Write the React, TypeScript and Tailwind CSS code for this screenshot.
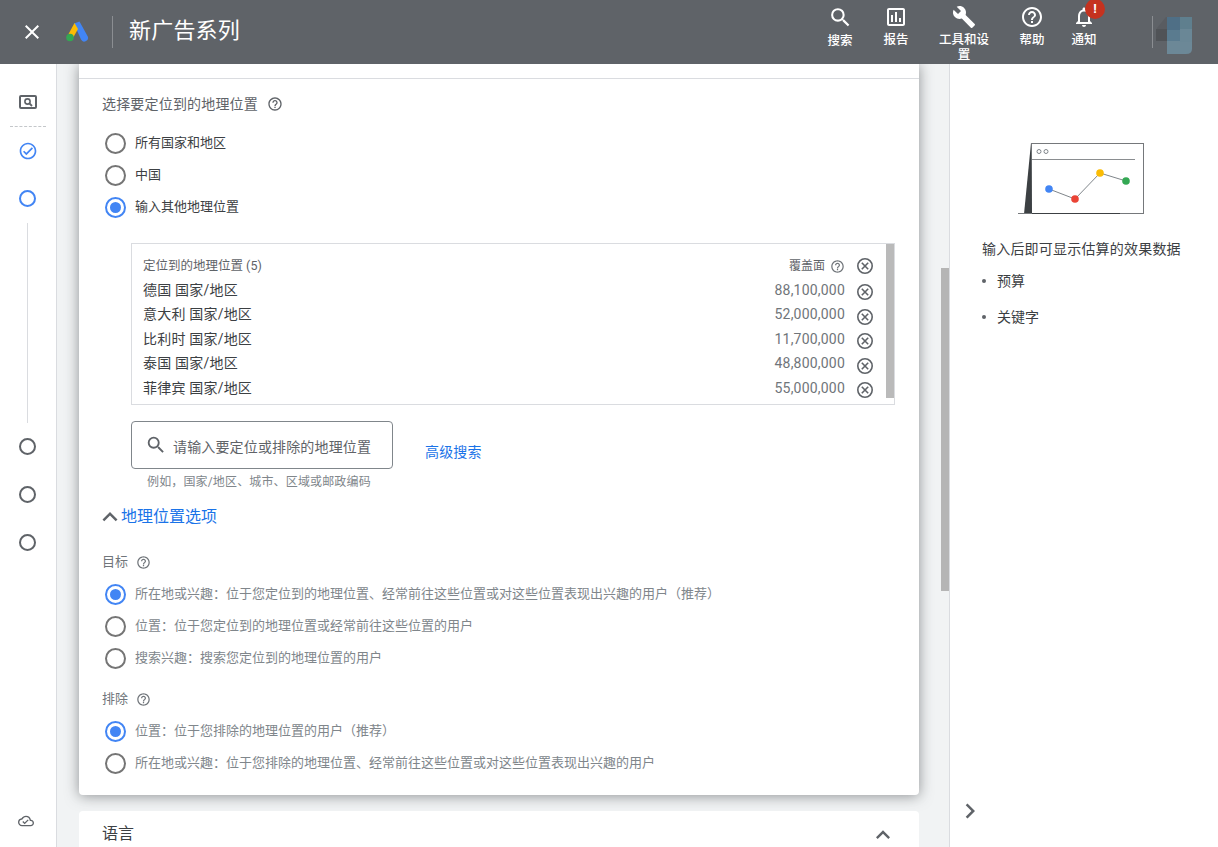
import {
  MdBuild,
  MdChevronRight,
  MdClose,
  MdHelpOutline,
  MdKeyboardArrowUp,
  MdNotificationsNone,
  MdOutlineAssessment,
  MdOutlineCheckCircle,
  MdOutlineCloudDone,
  MdSearch,
} from 'react-icons/md'

const font = "font-['Roboto','Noto_Sans_CJK_SC',sans-serif]"

const locations = [
  { name: '德国 国家/地区', reach: '88,100,000' },
  { name: '意大利 国家/地区', reach: '52,000,000' },
  { name: '比利时 国家/地区', reach: '11,700,000' },
  { name: '泰国 国家/地区', reach: '48,800,000' },
  { name: '菲律宾 国家/地区', reach: '55,000,000' },
]

function Radio({ checked, label, muted }: { checked?: boolean; label: string; muted?: boolean }) {
  return (
    <div className="flex h-[32px] items-center">
      <div className={`ml-[2.5px] flex h-[21px] w-[21px] items-center justify-center rounded-full border-2 ${checked ? 'border-[#4285f4]' : 'border-[#757575]'}`}>
        {checked && <div className="h-[11px] w-[11px] rounded-full bg-[#4285f4]" />}
      </div>
      <span className={`ml-[9.5px] text-[13px] ${muted ? 'text-[#80868b]' : 'text-[#3c4043]'}`}>{label}</span>
    </div>
  )
}

function NavItem({ icon, label, className }: { icon: React.ReactNode; label: string; className: string }) {
  return (
    <div className={`flex flex-col items-center self-start pt-[5px] text-center text-[12.5px] leading-[15px] font-medium text-white ${className}`}>
      {icon}
      <span className="mt-[3px]">{label}</span>
    </div>
  )
}

function StepCircle({ blue, className }: { blue?: boolean; className: string }) {
  return <div className={`h-[17px] w-[17px] rounded-full border-2 ${blue ? 'border-[#4285f4]' : 'border-[#5f6368]'} ${className}`} />
}

function RemoveIcon({ className }: { className: string }) {
  return (
    <svg width="18" height="18" viewBox="0 0 18 18" className={className}>
      <circle cx="9" cy="9" r="7.2" fill="none" stroke="#5f6368" strokeWidth="1.6" />
      <path d="M5.8 5.8 L12.2 12.2 M12.2 5.8 L5.8 12.2" stroke="#5f6368" strokeWidth="1.6" />
    </svg>
  )
}

function ChartIllustration() {
  return (
    <svg width="128" height="74" viewBox="0 0 128 74" className="ml-[35px]">
      <rect x="14.5" y="1.5" width="112" height="70" fill="#fff" stroke="#75787b" />
      <path d="M14 1 L7 72 L15 72 Z" fill="#3c4043" />
      <path d="M1 71.5 H127" stroke="#75787b" />
      <path d="M15 71.5 H103" stroke="#3c4043" />
      <path d="M15 17.5 H118" stroke="#8a8d90" strokeWidth="1.2" />
      <circle cx="22" cy="9.5" r="2" fill="none" stroke="#80868b" />
      <circle cx="29" cy="9.5" r="2" fill="none" stroke="#80868b" />
      <path d="M32 47 L58 57 L83 31 L109 39" fill="none" stroke="#80868b" />
      <circle cx="32" cy="47" r="3.8" fill="#4285f4" />
      <circle cx="58" cy="57" r="3.8" fill="#ea4335" />
      <circle cx="83" cy="31" r="3.8" fill="#fbbc04" />
      <circle cx="109" cy="39" r="3.8" fill="#34a853" />
    </svg>
  )
}

export default function App() {
  return (
    <div className={`flex h-[847px] w-[1218px] flex-col overflow-hidden bg-white ${font}`}>
      {/* Header */}
      <header className="flex h-[64px] shrink-0 items-start bg-[#5f6368]">
        <MdClose className="ml-[20px] mt-[20px] h-[24px] w-[24px] text-white" />
        <svg width="24" height="24" viewBox="0 0 24 24" className="ml-[21px] mt-[20px]">
          <path d="M9 3.5 L14.5 1.5 L22.5 16 A3.6 3.6 0 0 1 16 19.6 Z" fill="#4285f4" />
          <path d="M9.5 3 L3 15 L8.5 17 L13 9 Z" fill="#fbbc04" />
          <circle cx="5" cy="17.5" r="3.8" fill="#34a853" />
        </svg>
        <div className="ml-[23px] mt-[16px] h-[32px] w-px bg-[#8b8e92]" />
        <div className="ml-[16px] mt-[16px] w-[111px] text-[22px] leading-[30px] tracking-[0.2px] text-white">新广告系列</div>
        <NavItem className="ml-[587px] w-[26px]" label="搜索" icon={<MdSearch className="h-[25px] w-[25px]" />} />
        <NavItem className="ml-[30px] w-[26px]" label="报告" icon={<MdOutlineAssessment className="h-[24px] w-[24px]" />} />
        <NavItem className="ml-[29px] w-[52px]" label="工具和设置" icon={<MdBuild className="h-[24px] w-[24px]" />} />
        <NavItem className="ml-[29px] w-[26px]" label="帮助" icon={<MdHelpOutline className="h-[24px] w-[24px]" />} />
        <div className="relative">
          <NavItem className="ml-[26px] w-[26px]" label="通知" icon={<MdNotificationsNone className="h-[24px] w-[24px]" />} />
          <div className="absolute left-[40px] top-[-1px] flex h-[20px] w-[20px] items-center justify-center rounded-full bg-[#c5321f] text-[13px] font-bold text-white">!</div>
        </div>
        <div className="ml-[55px] mt-[16px] h-[32px] w-px bg-[#8b8e92]" />
        <svg width="38" height="40" viewBox="0 0 38 40" className="ml-[1px] mt-[15px]">
          <path d="M3 13 L12 2 H26 V26 H2 V16 Z" fill="#595c61" />
          <rect x="2" y="14" width="24" height="12" fill="#505357" />
          <rect x="13" y="2" width="13" height="13" fill="#4f6f86" />
          <rect x="26" y="2" width="12" height="13" fill="#5f7f8e" />
          <path d="M13 26 H38 V34 Q38 39 32 39 H13 Z" fill="#6c8897" />
          <rect x="26" y="14" width="12" height="13" fill="#6a8796" />
          <rect x="13" y="15" width="13" height="11" fill="#5a7b8f" />
        </svg>
      </header>

      <div className="flex min-h-0 flex-1">
        {/* Step rail */}
        <aside className="flex w-[57px] shrink-0 flex-col items-center border-r border-[#dadce0] pr-px">
          <svg width="18" height="14" viewBox="0 0 18 14" className="mt-[31px]">
            <rect x="1" y="1" width="16" height="12" rx="1" fill="none" stroke="#5f6368" strokeWidth="2" />
            <circle cx="8.5" cy="6.5" r="2.6" fill="none" stroke="#5f6368" strokeWidth="1.6" />
            <path d="M10.5 8.5 L13 11" stroke="#5f6368" strokeWidth="1.8" />
          </svg>
          <div className="mt-[17px] w-[36px] border-t border-dashed border-[#c4c7ca]" />
          <MdOutlineCheckCircle className="mt-[14px] h-[20px] w-[20px] text-[#4285f4]" />
          <StepCircle blue className="mt-[29px]" />
          <div className="mt-[16px] h-[200px] w-px bg-[#dadce0]" />
          <StepCircle className="mt-[15px]" />
          <StepCircle className="mt-[31px]" />
          <StepCircle className="mt-[31px]" />
          <MdOutlineCloudDone className="-ml-[3px] mt-[262px] h-[16px] w-[16px] text-[#5f6368]" />
        </aside>

        {/* Main column */}
        <main className="relative w-[892px] shrink-0 overflow-hidden bg-[#f1f3f4] pl-[22px] pr-[30px]">
          <section className="rounded-b-[4px] bg-white shadow-[0_1px_14px_rgba(60,64,67,0.55)]">
            <div className="h-[15px] border-b border-[#dadce0]" />
            <div className="pb-[16px] pl-[23px]">
              <div className="mt-[15px] flex h-[20px] items-center text-[14px] tracking-[0.18px] text-[#5f6368]">
                选择要定位到的地理位置
                <MdHelpOutline className="ml-[9px] h-[16px] w-[16px]" />
              </div>
              <div className="mt-[13px]">
                <Radio label="所有国家和地区" />
                <Radio label="中国" />
                <Radio checked label="输入其他地理位置" />
              </div>

              <div className="ml-[29px] mt-[20px] flex h-[162px] w-[764px] border border-[#dadce0] pl-[11px] pt-[11px]">
                <div className="flex-1">
                  <div className="flex h-[23px] items-center pb-px text-[12px] text-[#5f6368]">
                    <span className="flex-1 text-[12.5px]">定位到的地理位置 (5)</span>
                    <span>覆盖面</span>
                    <MdHelpOutline className="ml-[5px] h-[15px] w-[15px] text-[#70757a]" />
                    <RemoveIcon className="ml-[11px]" />
                  </div>
                  {locations.map(l => (
                    <div key={l.name} className="flex h-[24.5px] items-center text-[14px] tracking-[0.2px]">
                      <span className="flex-1 text-[#3c4043]">{l.name}</span>
                      <span className="text-[#70757a]">{l.reach}</span>
                      <RemoveIcon className="ml-[11px] mt-[4px]" />
                    </div>
                  ))}
                </div>
                <div className="ml-[12px] -mt-[11px] h-[154px] w-[8px] bg-[#bababa]" />
              </div>

              <div className="ml-[29px] mt-[16px] flex items-center">
                <div className="flex h-[48px] w-[262px] items-center rounded-[4px] border border-[#80868b] pl-[13px]">
                  <MdSearch className="h-[22px] w-[22px] text-[#5f6368]" />
                  <span className="ml-[6px] mt-[4px] text-[14px] tracking-[0.15px] text-[#5f6368]">请输入要定位或排除的地理位置</span>
                </div>
                <a className="ml-[32px] mt-[14px] text-[14px] tracking-[0.15px] text-[#1a73e8]">高级搜索</a>
              </div>
              <div className="ml-[45px] mt-[5px] h-[16px] text-[12px] leading-[16px] tracking-[0.15px] text-[#80868b]">例如，国家/地区、城市、区域或邮政编码</div>

              <div className="mt-[15px] flex h-[24px] items-center">
                <MdKeyboardArrowUp className="-ml-[7px] h-[30px] w-[30px] text-[#5f6368]" />
                <span className="-ml-[4px] text-[16px] text-[#1a73e8]">地理位置选项</span>
              </div>

              <div className="mt-[23px] flex h-[20px] items-center text-[13px] text-[#70757a]">
                目标
                <MdHelpOutline className="ml-[8px] h-[15px] w-[15px]" />
              </div>
              <div className="mt-[6px]">
                <Radio muted checked label="所在地或兴趣：位于您定位到的地理位置、经常前往这些位置或对这些位置表现出兴趣的用户（推荐）" />
                <Radio muted label="位置：位于您定位到的地理位置或经常前往这些位置的用户" />
                <Radio muted label="搜索兴趣：搜索您定位到的地理位置的用户" />
              </div>

              <div className="mt-[15px] flex h-[20px] items-center text-[13px] text-[#70757a]">
                排除
                <MdHelpOutline className="ml-[8px] h-[15px] w-[15px]" />
              </div>
              <div className="mt-[6px]">
                <Radio muted checked label="位置：位于您排除的地理位置的用户（推荐）" />
                <Radio muted label="所在地或兴趣：位于您排除的地理位置、经常前往这些位置或对这些位置表现出兴趣的用户" />
              </div>
            </div>
          </section>

          <section className="mt-[16px] flex h-[60px] items-start justify-between rounded-t-[4px] bg-white pl-[23px] pr-[22px] pt-[12px]">
            <span className="text-[16px] leading-[22px] text-[#3c4043]">语言</span>
            <MdKeyboardArrowUp className="-mt-[2px] h-[28px] w-[28px] text-[#5f6368]" />
          </section>

          {/* page scrollbar */}
          <div className="absolute right-0 top-[204px] h-[323px] w-[8px] bg-[#b5b5b5]" />
        </main>

        {/* Estimates panel */}
        <aside className="flex-1 border-l border-[#dadce0] pl-[32px]">
          <div className="mt-[78px]">
            <ChartIllustration />
          </div>
          <p className="mt-[23px] text-[14px] leading-[20px] tracking-[0.2px] text-[#3c4043]">输入后即可显示估算的效果数据</p>
          <ul className="mt-[12px] pl-[15px] text-[14px] leading-[20px] text-[#3c4043]">
            <li className="flex items-center">
              <span className="-ml-[15px] mr-[11px] h-[4px] w-[4px] rounded-full bg-[#5f6368]" />
              预算
            </li>
            <li className="mt-[16px] flex items-center">
              <span className="-ml-[15px] mr-[11px] h-[4px] w-[4px] rounded-full bg-[#5f6368]" />
              关键字
            </li>
          </ul>
          <MdChevronRight className="-ml-[27px] mt-[469px] h-[30px] w-[30px] text-[#5f6368]" />
        </aside>
      </div>
    </div>
  )
}
